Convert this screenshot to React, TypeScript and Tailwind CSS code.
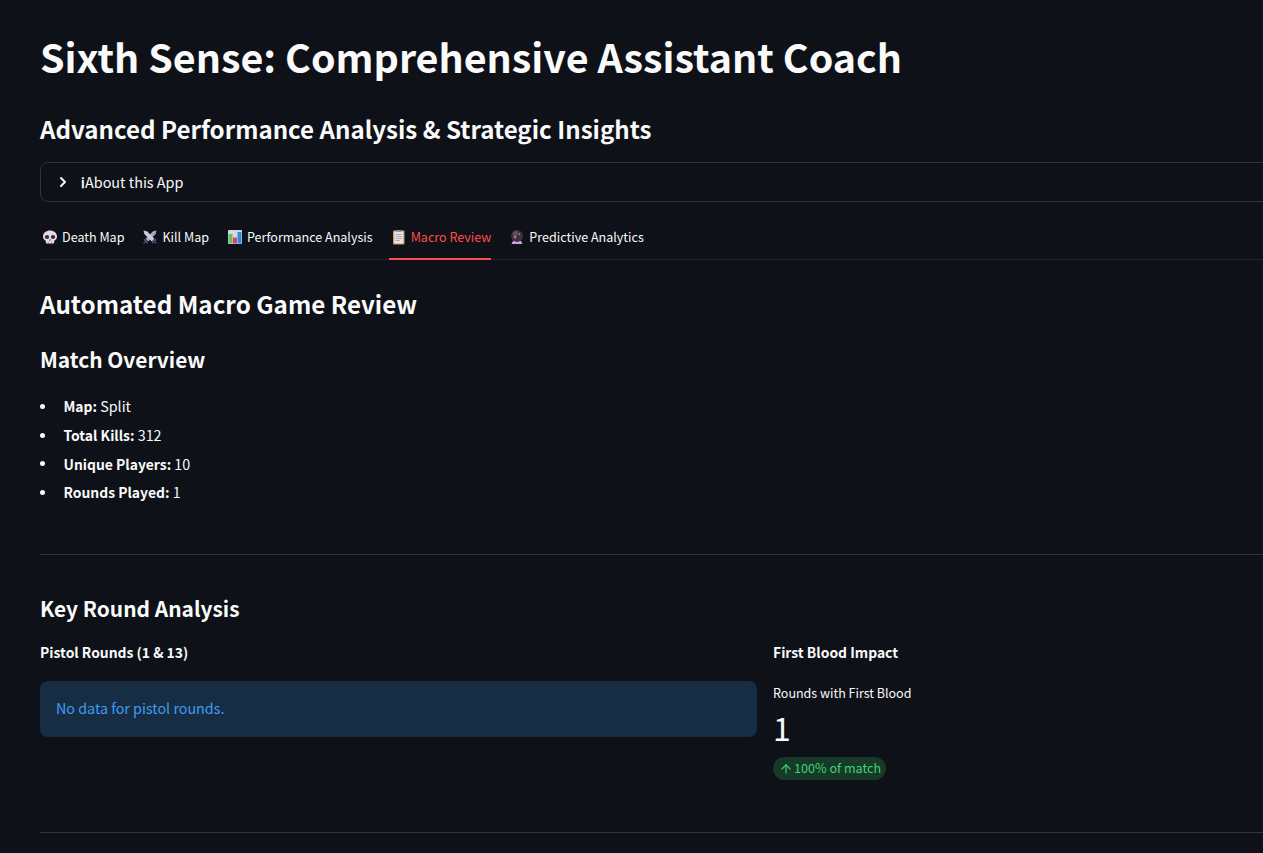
import { ArrowUp, ChevronRight } from "lucide-react";

function SkullIcon() {
    return <svg width="16" height="16" viewBox="0 0 16 16">
        <path d="M8 1.500C4.400 1.500 1 3.800 1 7.500c0 2 1 3.400 2.800 4.200V13.500c0 .6.400 1 1 1h6.400c.6 0 1-.4 1-1v-1.800C14 10.900 15 9.500 15 7.500 15 3.800 11.600 1.500 8 1.500z" fill="#e6d9e8"/>
        <ellipse cx="5" cy="8" rx="2.200" ry="2" fill="#3a2c40"/>
        <ellipse cx="11" cy="8" rx="2.200" ry="2" fill="#3a2c40"/>
        <path d="M8 10l-1 1.500h2z" fill="#3a2c40"/>
        <path d="M6.300 12.800v1.700M9.700 12.800v1.700" stroke="#8d7f96" strokeWidth=".8"/>
    </svg>
}

function SwordsIcon() {
    return <svg width="16" height="16" viewBox="0 0 16 16">
        <path d="M14.500 1.500L11 2.300 3.500 9.800l2.700 2.700L13.700 5z" fill="#a9a6c2"/>
        <path d="M1.500 1.500L5 2.300 12.500 9.800 9.800 12.500 2.300 5z" fill="#cbc9de"/>
        <path d="M2 10.200l3.800 3.800M14 10.200L10.200 14" stroke="#655a8c" strokeWidth="1.500"/>
        <path d="M1.500 14.500l2-2M14.500 14.500l-2-2" stroke="#4a4068" strokeWidth="1.500"/>
    </svg>
}

function ChartIcon() {
    return <svg width="16" height="16" viewBox="0 0 16 16">
        <rect x="1" y="1" width="14" height="14" rx="1" fill="#d5d9de"/>
        <rect x="1.500" y="5" width="4" height="9.500" fill="#62c35a"/>
        <rect x="6" y="8.500" width="4" height="6" fill="#e8387a"/>
        <rect x="10.500" y="3" width="4" height="11.500" fill="#2f8fd8"/>
    </svg>
}

function ClipboardIcon() {
    return <svg width="16" height="16" viewBox="0 0 16 16">
        <rect x="2" y="1.500" width="11.500" height="14" rx="1" fill="#d9955f"/>
        <rect x="3.300" y="2.500" width="9" height="12" fill="#e3e3e8"/>
        <rect x="5.300" y="1" width="5" height="2" rx=".5" fill="#8f8f98"/>
        <path d="M4.800 5.500h6M4.800 7.500h6M4.800 9.500h6M4.800 11.500h4" stroke="#a3a3ae" strokeWidth=".9"/>
    </svg>
}

function CrystalBallIcon() {
    return <svg width="16" height="16" viewBox="0 0 16 16">
        <path d="M4 12h8l1.500 3h-11z" fill="#c9a6e4"/>
        <circle cx="8" cy="7" r="6" fill="#3f3048"/>
        <circle cx="6.500" cy="4.500" r="2.500" fill="#5e5068"/>
        <path d="M6 6l.5 1.500 1.500.5-1.500.5L6 10l-.5-1.500L4 8l1.500-.5z" fill="#f2a63e"/>
        <circle cx="10.500" cy="5" r=".7" fill="#f2c14e"/>
    </svg>
}

const TABS = [
    {label: 'Death Map', icon: <SkullIcon/>},
    {label: 'Kill Map', icon: <SwordsIcon/>},
    {label: 'Performance Analysis', icon: <ChartIcon/>},
    {label: 'Macro Review', icon: <ClipboardIcon/>, active: true},
    {label: 'Predictive Analytics', icon: <CrystalBallIcon/>},
];

const OVERVIEW = [
    {label: 'Map:', value: 'Split'},
    {label: 'Total Kills:', value: '312'},
    {label: 'Unique Players:', value: '10'},
    {label: 'Rounds Played:', value: '1'},
];

export default function App() {
    return <div className="h-[853px] overflow-hidden bg-[#0e1117] text-[#fafafa] font-['Noto_Sans_CJK_JP',sans-serif]">
        <div className="w-[1320px] pl-10 pt-[28px]">
            <h1 className="text-[39.400px] leading-[56px] font-bold">Sixth Sense: Comprehensive Assistant Coach</h1>

            <h2 className="mt-[27px] text-[24.100px] leading-[36px] font-semibold">Advanced Performance Analysis &amp; Strategic Insights</h2>

            <div className="mt-[15px] h-10 flex items-center rounded-lg border border-[#31333f] pl-[14px]">
                <ChevronRight size={16} strokeWidth={3}/>
                <span className="ml-2.5 text-[14.400px] leading-6"><b>ℹ</b>About this App</span>
            </div>

            <div className="mt-4 h-[42px] flex gap-4 border-b border-[#262730]">
                {TABS.map((tab) => (
                    <div key={tab.label}
                         className={`h-[42px] flex items-center gap-1 pl-[2px] pb-[2px] text-[12.550px] leading-5 border-b-2 ${tab.active ? 'border-[#ff4b4b] text-[#ff4b4b]' : 'border-transparent'}`}>
                        {tab.icon}
                        <span>{tab.label}</span>
                    </div>
                ))}
            </div>

            <h2 className="mt-[26px] text-[24.200px] leading-[36px] font-semibold">Automated Macro Game Review</h2>

            <h3 className="mt-[21px] text-[20.900px] leading-[32px] font-semibold">Match Overview</h3>

            <ul className="mt-[17px] text-[14.300px] leading-[28.800px]">
                {OVERVIEW.map((row) => (
                    <li key={row.label} className="flex items-center">
                        <span className="w-[5px] h-[5px] rounded-full bg-[#fafafa] mr-[18.500px]"/>
                        <span><b className="text-[13.900px] font-semibold">{row.label}</b> {row.value}</span>
                    </li>
                ))}
            </ul>

            <div className="mt-[47px] border-t border-[#31333f]"/>

            <h3 className="mt-[37px] text-[20.900px] leading-[32px] font-semibold">Key Round Analysis</h3>

            <div className="mt-4 flex gap-4 w-[1223px]">
                <div className="w-[717px]">
                    <div className="text-[13.900px] leading-6 font-semibold">Pistol Rounds (1 &amp; 13)</div>
                    <div className="mt-[17px] h-14 flex items-center rounded-lg bg-[#172d43] px-4 pb-[2px] text-[14.300px] text-[#3d9df3]">No data for pistol rounds.</div>
                </div>
                <div>
                    <div className="text-[13.900px] leading-6 font-semibold">First Blood Impact</div>
                    <div className="mt-[19px] text-[12.500px] leading-5">Rounds with First Blood</div>
                    <div className="mt-[2px] text-[32px] leading-[44px] font-normal">1</div>
                    <div className="mt-2 w-fit h-[23px] flex items-center gap-[1px] rounded-full bg-[#173928] pl-[6px] pr-[5px] text-[12.600px] text-[#3dd56d]">
                        <ArrowUp size={14} strokeWidth={2}/>
                        <span>100% of match</span>
                    </div>
                </div>
            </div>

            <div className="mt-[52px] border-t border-[#31333f]"/>
        </div>
    </div>
}
